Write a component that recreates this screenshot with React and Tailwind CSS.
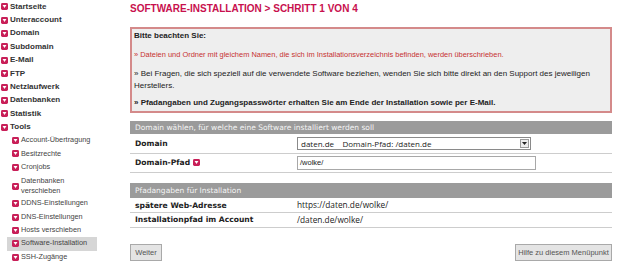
import React from "react";

const TOP_ITEMS = [
  "Startseite",
  "Unteraccount",
  "Domain",
  "Subdomain",
  "E-Mail",
  "FTP",
  "Netzlaufwerk",
  "Datenbanken",
  "Statistik",
  "Tools",
];

const TOOL_ITEMS = [
  "Account-Übertragung",
  "Besitzrechte",
  "Cronjobs",
  "Datenbanken verschieben",
  "DDNS-Einstellungen",
  "DNS-Einstellungen",
  "Hosts verschieben",
  "Software-Installation",
  "SSH-Zugänge",
];

function Bullet({ size = 8 }) {
  return (
    <svg width={size} height={size} viewBox="0 0 8 8" className="shrink-0">
      <rect x="0" y="0" width="8" height="8" rx="1.6" fill="#c81f58" />
      <path d="M1.8 2.4h4.4L4 5.8z" fill="#fff" />
    </svg>
  );
}

function Sidebar() {
  return (
    <nav className="w-[126px] shrink-0 text-[#333]">
      {TOP_ITEMS.map((item) => (
        <div key={item} className="flex h-[13.4px] items-center gap-[2px] pl-[1px] text-[8px] font-bold">
          <Bullet size={7} />
          <span>{item}</span>
        </div>
      ))}
      {TOOL_ITEMS.map((item) => {
        const active = item === "Software-Installation";
        const twoLine = item === "Datenbanken verschieben";
        return (
          <div
            key={item}
            className={`ml-[7px] flex w-[90px] items-center gap-[2px] pl-[5px] text-[7.3px] text-[#444] ${
              twoLine ? "h-[23px] pt-[1px]" : "h-[13.4px]"
            } ${active ? "bg-[#d6d6d6]" : ""}`}
          >
            <Bullet size={7} />
            {twoLine ? (
              <span className="leading-[10px]">
                Datenbanken
                <br />
                verschieben
              </span>
            ) : (
              <span>{item}</span>
            )}
          </div>
        );
      })}
    </nav>
  );
}

function Notice() {
  return (
    <div className="mt-[13px] border-2 border-[#d48a8a] bg-[#eeeeee] px-[2px] pb-[2px] pt-[1px] text-[8px] leading-[12px] text-[#222]">
      <p className="font-bold">Bitte beachten Sie:</p>
      <p className="mt-[7px] text-[7.45px] text-[#c73232]">
        » Dateien und Ordner mit gleichem Namen, die sich im Installationsverzeichnis befinden, werden überschrieben.
      </p>
      <p className="mt-[7px]">
        » Bei Fragen, die sich speziell auf die verwendete Software beziehen, wenden Sie sich bitte direkt an den Support des jeweiligen Herstellers.
      </p>
      <p className="mt-[5px] font-bold">
        » Pfadangaben und Zugangspasswörter erhalten Sie am Ende der Installation sowie per E-Mail.
      </p>
    </div>
  );
}

function SectionHead({ children, className = "" }) {
  return (
    <div
      className={`flex items-center bg-[#9b9b9b] pl-[5px] font-['DejaVu_Sans',Verdana,sans-serif] text-[7.5px] text-[#f4f4f4] ${className}`}
    >
      {children}
    </div>
  );
}

function Row({ label, help, children, className = "h-[19px]" }) {
  return (
    <div className={`flex items-center border-b border-[#cdcdcd] ${className}`}>
      <div className="flex w-[167px] shrink-0 items-center gap-[3px] pl-[5px] font-['DejaVu_Sans',Verdana,sans-serif] text-[7.6px] font-bold text-[#222]">
        {label}
        {help && <Bullet size={7} />}
      </div>
      <div className="flex-1 font-['Open_Sans',sans-serif] text-[8.3px] text-[#222]">{children}</div>
    </div>
  );
}

export default function App() {
  return (
    <div className="flex h-[266px] w-[620px] overflow-hidden bg-white font-['Liberation_Sans',Arial,sans-serif]">
      <Sidebar />
      <main className="flex-1 pl-[4px] pr-[8px]">
        <h1 className="h-[14px] pt-[2px] text-[10px] font-bold leading-[13px] text-[#c8104e]">
          SOFTWARE-INSTALLATION &gt; SCHRITT 1 VON 4
        </h1>
        <Notice />

        <SectionHead className="mt-[8px] h-[13px]">
          Domain wählen, für welche eine Software installiert werden soll
        </SectionHead>
        <Row label="Domain" className="h-[20px]">
          <div className="flex h-[13px] w-[234px] items-center border border-[#8a8a8a] bg-white pl-[3px] text-[8px]">
            <span className="flex-1 whitespace-pre">daten.de    Domain-Pfad: /daten.de</span>
            <span className="mr-[1px] flex h-[9px] w-[9px] items-center justify-center border border-[#9a9a9a] bg-[#ececec]">
              <svg width="5" height="3" viewBox="0 0 5 3">
                <path d="M0 0h5L2.5 3z" fill="#222" />
              </svg>
            </span>
          </div>
        </Row>
        <Row label="Domain-Pfad" help>
          <div className="flex h-[14px] w-[239px] items-center border border-[#a8a8a8] bg-white pl-[2px] font-['Liberation_Sans',Arial,sans-serif] text-[7.5px]">
            /wolke/
          </div>
        </Row>

        <SectionHead className="mt-[10px] h-[15px]">Pfadangaben für Installation</SectionHead>
        <Row label="spätere Web-Adresse" className="h-[15px] pt-[1px]">
          https://daten.de/wolke/
        </Row>
        <Row label="Installationpfad im Account" className="h-[15px]">
          /daten.de/wolke/
        </Row>

        <div className="mt-[16px] flex items-center justify-between">
          <button className="flex h-[17px] w-[32px] items-center justify-center border border-[#a9a9a9] bg-[#e4e4e4] text-[7.5px] text-[#555]">
            Weiter
          </button>
          <button className="flex h-[17px] w-[97px] items-center justify-center border border-[#a9a9a9] bg-[#e4e4e4] text-[7.5px] text-[#555]">
            Hilfe zu diesem Menüpunkt
          </button>
        </div>
      </main>
    </div>
  );
}
